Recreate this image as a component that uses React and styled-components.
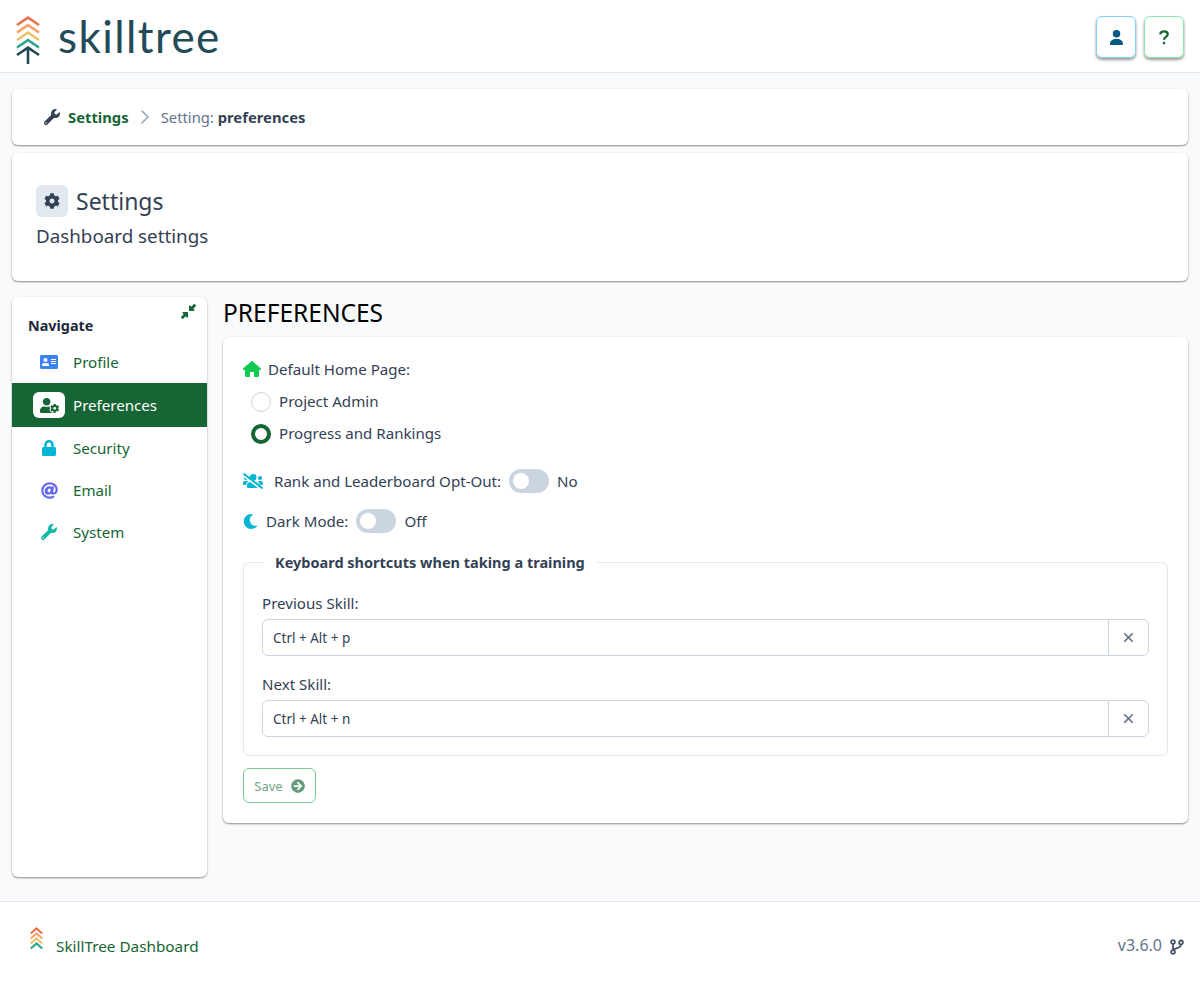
import React from "react";
import styled, { createGlobalStyle } from "styled-components";
import {
  FaWrench, FaCog, FaAddressCard, FaUserCog, FaLock, FaAt,
  FaUsersSlash, FaMoon, FaArrowCircleRight,
} from "react-icons/fa";
import { FaDownLeftAndUpRightToCenter, FaHouse, FaUser } from "react-icons/fa6";
import { ChevronRight, X } from "lucide-react";

const GlobalStyle = createGlobalStyle`
  html, body { margin: 0; padding: 0; }
  body {
    background: #f8fafc;
    color: #334155;
    font-family: "Noto Sans", sans-serif;
    font-size: 15.1px;
  }
`;

const TreeLogo = () => (
  <svg width="24" height="48" viewBox="0 0 24 48" fill="none" strokeWidth="2.6">
    <path d="M1 9 L12 1.6 L23 9" stroke="#e8704f" />
    <path d="M1 16.5 L12 9.1 L23 16.5" stroke="#f2a468" />
    <path d="M1 24 L12 16.6 L23 24" stroke="#eec16e" />
    <path d="M1 31.5 L12 24.1 L23 31.5" stroke="#2fa394" />
    <path d="M1 39 L12 31.6 L23 39 M12 32 V48" stroke="#234a57" />
  </svg>
);

const FooterLogo = () => (
  <svg width="13" height="23" viewBox="0 0 13 23" fill="none" strokeWidth="2.1">
    <path d="M.8 6.5 L6.5 1.4 L12.2 6.5" stroke="#e8704f" />
    <path d="M.8 11.5 L6.5 6.4 L12.2 11.5" stroke="#f2a468" />
    <path d="M.8 16.5 L6.5 11.4 L12.2 16.5" stroke="#eec16e" />
    <path d="M.8 21.5 L6.5 16.4 L12.2 21.5" stroke="#2fa394" />
  </svg>
);

const QuestionMark = () => (
  <svg width="10" height="15" viewBox="0 0 11 16" fill="none" stroke="currentColor" strokeWidth="2.5">
    <path d="M1.4 4.6 C1.4 2.4 3.2 1.3 5.4 1.3 C7.8 1.3 9.6 2.4 9.6 4.4 C9.6 7.4 5.5 7.2 5.5 10.6" />
    <path d="M5.5 12.8 V15.4" />
  </svg>
);

const BranchIcon = () => (
  <svg width="14" height="16" viewBox="0 0 14 16" fill="none" stroke="currentColor" strokeWidth="1.8">
    <circle cx="3" cy="3" r="1.9" />
    <circle cx="11" cy="3.4" r="1.9" />
    <circle cx="3" cy="13" r="1.9" />
    <path d="M3 5 V11 M11 5.4 C11 9 6.5 9 3 10.4" />
  </svg>
);

const Header = styled.header`
  height: 72px;
  background: #fff;
  border-bottom: 1px solid #e2e8f0;
  display: flex;
  align-items: center;
  justify-content: space-between;
  padding: 0 16px;
`;

const Brand = styled.div`
  display: flex;
  align-items: center;
  gap: 18px;
  margin-top: 8px;
`;

const BrandName = styled.span`
  font-family: Lato, sans-serif;
  font-size: 44px;
  font-weight: 400;
  color: #234a57;
  letter-spacing: 1.4px;
  line-height: 1;
  margin-top: -8px;
`;

const HeaderButtons = styled.div`
  display: flex;
  gap: 8px;
  margin-top: 2px;
`;

const IconButton = styled.button`
  width: 40px;
  height: 42px;
  padding: 0;
  background: #fff;
  border: 1px solid ${(p) => p.$border};
  border-radius: 6px;
  color: ${(p) => p.$color};
  font-size: 15px;
  display: flex;
  align-items: center;
  justify-content: center;
  box-shadow: 0 2px 3px rgba(0, 0, 0, 0.4);
`;

const Page = styled.main`
  padding: 16px 12px 24px;
`;

const Card = styled.section`
  background: #fff;
  border-radius: 6px;
  box-shadow: 0 1px 2px rgba(0, 0, 0, 0.45);
`;

const Breadcrumb = styled(Card)`
  height: 56px;
  display: flex;
  align-items: center;
  padding-left: 32px;
`;

const CrumbLink = styled.span`
  display: flex;
  align-items: center;
  gap: 8px;
  color: #166534;
  font-weight: 700;
  font-size: 14.8px;
  svg { color: #334155; font-size: 16px; }
`;

const CrumbCurrent = styled.span`
  color: #64748b;
  font-size: 14.8px;
  b { color: #334155; font-weight: 700; }
`;

const CrumbSep = styled(ChevronRight)`
  color: #94a3b8;
  margin: 0 4px 0 4px;
`;

const TitleCard = styled(Card)`
  margin-top: 8px;
  height: 128px;
  padding: 32px 24px 0;
  box-sizing: border-box;
`;

const TitleRow = styled.div`
  display: flex;
  align-items: center;
  gap: 8px;
`;

const TitleIcon = styled.span`
  width: 32px;
  height: 32px;
  background: #e2e8f0;
  border-radius: 6px;
  display: flex;
  align-items: center;
  justify-content: center;
  font-size: 16px;
  color: #334155;
`;

const Title = styled.h1`
  margin: 0;
  font-size: 23px;
  font-weight: 400;
  color: #334155;
  line-height: 32px;
`;

const Subtitle = styled.div`
  font-size: 18.8px;
  line-height: 24px;
  margin-top: 7px;
  color: #334155;
`;

const Columns = styled.div`
  display: flex;
  gap: 16px;
  margin-top: 16px;
  align-items: flex-start;
`;

const Sidebar = styled(Card)`
  position: relative;
  width: 195px;
  height: 580px;
  flex: none;
`;

const CollapseBtn = styled.span`
  position: absolute;
  top: 7px;
  right: 11px;
  color: #166534;
  font-size: 15px;
  line-height: 1;
`;

const NavTitle = styled.div`
  padding: 19px 16px 0;
  font-weight: 700;
  font-size: 14.4px;
  line-height: 20px;
  color: #1e293b;
`;

const NavList = styled.nav`
  margin-top: 5px;
`;

const NavItem = styled.div`
  height: ${(p) => (p.$active ? 44 : 42)}px;
  display: flex;
  align-items: center;
  padding-left: 21px;
  background: ${(p) => (p.$active ? "#166534" : "transparent")};
  color: ${(p) => (p.$active ? "#fff" : "#166534")};
`;

const NavIcon = styled.span`
  width: 32px;
  height: 26px;
  margin-right: 8px;
  border-radius: 6px;
  background: ${(p) => (p.$active ? "#fff" : "transparent")};
  color: ${(p) => p.$color};
  font-size: ${(p) => p.$size || 18}px;
  display: flex;
  align-items: center;
  justify-content: center;
`;

const Content = styled.div`
  flex: 1;
  min-width: 0;
`;

const SectionTitle = styled.h2`
  margin: 0;
  font-size: 24.5px;
  font-weight: 400;
  line-height: 32px;
  color: #000;
  height: 40px;
`;

const PrefsCard = styled(Card)`
  height: 486px;
  padding: 20px;
  box-sizing: border-box;
`;

const FieldLabel = styled.div`
  display: flex;
  align-items: center;
  gap: ${(p) => p.$gap || 8}px;
  height: 24px;
  margin-top: ${(p) => p.$top || 0}px;
  svg { flex: none; }
`;

const ToggleText = styled.span`
  margin-left: ${(p) => p.$left || 0}px;
`;

const RadioRow = styled.label`
  display: flex;
  align-items: center;
  gap: 8px;
  height: 20px;
  margin-top: ${(p) => p.$top}px;
  padding-left: 8px;
`;

const Radio = styled.span`
  width: 20px;
  height: 20px;
  box-sizing: border-box;
  border-radius: 50%;
  background: #fff;
  border: ${(p) => (p.$checked ? "4px solid #166534" : "1px solid #cbd5e1")};
  margin-top: 2px;
`;

const Toggle = styled.span`
  position: relative;
  width: 40px;
  height: 24px;
  border-radius: 12px;
  background: #cbd5e1;
  &::before {
    content: "";
    position: absolute;
    left: 4px;
    top: 4px;
    width: 16px;
    height: 16px;
    border-radius: 50%;
    background: #fff;
  }
`;

const Fieldset = styled.fieldset`
  margin: 18px 0 0;
  padding: 0 18px 18px;
  border: 1px solid #e2e8f0;
  border-radius: 6px;
`;

const Legend = styled.legend`
  margin-left: 1px;
  padding: 0 12px;
  font-weight: 700;
  line-height: 22px;
  font-size: 14.5px;
  color: #334155;
`;

const ShortcutLabel = styled.div`
  line-height: 20px;
  margin: ${(p) => p.$top}px 0 6px;
`;

const InputGroup = styled.div`
  display: flex;
  height: 37px;
  box-sizing: border-box;
  border: 1px solid #cbd5e1;
  border-radius: 6px;
`;

const ShortcutInput = styled.input`
  flex: 1;
  min-width: 0;
  border: 0;
  outline: 0;
  background: transparent;
  padding: 0 10px;
  font-family: "Noto Sans", sans-serif;
  font-size: 13.5px;
  color: #334155;
`;

const ClearBtn = styled.span`
  width: 39px;
  border-left: 1px solid #cbd5e1;
  color: #64748b;
  display: flex;
  align-items: center;
  justify-content: center;
`;

const SaveBtn = styled.button`
  margin-top: 12px;
  width: 73px;
  height: 35px;
  padding: 0;
  background: #fff;
  border: 1px solid #7ccb98;
  border-radius: 6px;
  display: flex;
  align-items: center;
  justify-content: center;
  gap: 8px;
  font-family: "Noto Sans", sans-serif;
  font-size: 13px;
  color: #73a387;
  svg { font-size: 14px; color: #649a7c; }
`;

const Footer = styled.footer`
  height: 80px;
  background: #fff;
  border-top: 1px solid #e2e8f0;
  display: flex;
  align-items: center;
  justify-content: space-between;
  padding: 0 16px 0 30px;
`;

const FooterBrand = styled.div`
  display: flex;
  align-items: flex-start;
  gap: 13px;
  color: #166534;
  font-size: 15.3px;
  svg { margin-top: -2px; }
  span { margin-top: 7px; }
`;

const Version = styled.div`
  display: flex;
  align-items: center;
  gap: 8px;
  margin-top: 6px;
  color: #64748b;
  font-size: 16px;
  svg { color: #475569; margin-top: 4px; }
`;

export default function App() {
  return (
    <>
      <GlobalStyle />
      <Header>
        <Brand>
          <TreeLogo />
          <BrandName>skilltree</BrandName>
        </Brand>
        <HeaderButtons>
          <IconButton $border="#7dd3fc" $color="#075985"><FaUser /></IconButton>
          <IconButton $border="#86efac" $color="#166534"><QuestionMark /></IconButton>
        </HeaderButtons>
      </Header>
      <Page>
        <Breadcrumb>
          <CrumbLink><FaWrench />Settings</CrumbLink>
          <CrumbSep size={24} strokeWidth={1.5} />
          <CrumbCurrent>Setting: <b>preferences</b></CrumbCurrent>
        </Breadcrumb>
        <TitleCard>
          <TitleRow>
            <TitleIcon><FaCog /></TitleIcon>
            <Title>Settings</Title>
          </TitleRow>
          <Subtitle>Dashboard settings</Subtitle>
        </TitleCard>
        <Columns>
          <Sidebar>
            <CollapseBtn><FaDownLeftAndUpRightToCenter /></CollapseBtn>
            <NavTitle>Navigate</NavTitle>
            <NavList>
              <NavItem><NavIcon $color="#3b82f6"><FaAddressCard /></NavIcon>Profile</NavItem>
              <NavItem $active><NavIcon $active $color="#166534" $size={19}><FaUserCog /></NavIcon>Preferences</NavItem>
              <NavItem><NavIcon $color="#06b6d4" $size={16}><FaLock /></NavIcon>Security</NavItem>
              <NavItem><NavIcon $color="#6366f1" $size={17}><FaAt /></NavIcon>Email</NavItem>
              <NavItem><NavIcon $color="#14b8a6" $size={16}><FaWrench /></NavIcon>System</NavItem>
            </NavList>
          </Sidebar>
          <Content>
            <SectionTitle>PREFERENCES</SectionTitle>
            <PrefsCard>
              <FieldLabel $gap={7}><FaHouse size={18} color="#12c954" />Default Home Page:</FieldLabel>
              <RadioRow $top={10}><Radio />Project Admin</RadioRow>
              <RadioRow $top={12}><Radio $checked />Progress and Rankings</RadioRow>
              <FieldLabel $top={26}><FaUsersSlash size={20} color="#06b6d4" /><ToggleText $left={3}>Rank and Leaderboard Opt-Out:</ToggleText><Toggle />No</FieldLabel>
              <FieldLabel $top={16}><FaMoon size={15} color="#06b6d4" /><span>Dark Mode:</span><Toggle />Off</FieldLabel>
              <Fieldset>
                <Legend>Keyboard shortcuts when taking a training</Legend>
                <ShortcutLabel $top={20}>Previous Skill:</ShortcutLabel>
                <InputGroup>
                  <ShortcutInput readOnly value="Ctrl + Alt + p" />
                  <ClearBtn><X size={15} strokeWidth={2.8} /></ClearBtn>
                </InputGroup>
                <ShortcutLabel $top={18}>Next Skill:</ShortcutLabel>
                <InputGroup>
                  <ShortcutInput readOnly value="Ctrl + Alt + n" />
                  <ClearBtn><X size={15} strokeWidth={2.8} /></ClearBtn>
                </InputGroup>
              </Fieldset>
              <SaveBtn>Save<FaArrowCircleRight /></SaveBtn>
            </PrefsCard>
          </Content>
        </Columns>
      </Page>
      <Footer>
        <FooterBrand>
          <FooterLogo />
          <span>SkillTree Dashboard</span>
        </FooterBrand>
        <Version>v3.6.0<BranchIcon /></Version>
      </Footer>
    </>
  );
}
